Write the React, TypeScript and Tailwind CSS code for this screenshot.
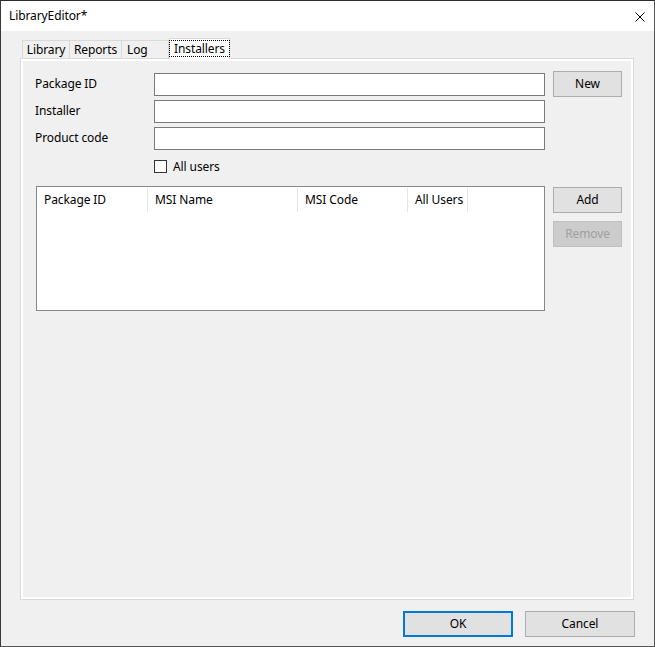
import React from 'react';

const font = { fontFamily: '"Noto Sans", "Open Sans", sans-serif' };

interface BtnProps {
  label: string;
  disabled?: boolean;
  primary?: boolean;
  className?: string;
}

const WinButton: React.FC<BtnProps> = ({ label, disabled, primary, className }) => {
  let cls = 'flex items-center justify-center text-[12px] ';
  if (disabled) cls += 'bg-[#cccccc] border border-[#bfbfbf] text-[#a0a0a0] ';
  else if (primary) cls += 'bg-[#e1e1e1] border-2 border-[#0078d7] text-black ';
  else cls += 'bg-[#e1e1e1] border border-[#adadad] text-black ';
  return <div className={cls + (className || '')}>{label}</div>;
};

const TextBox: React.FC = () => (
  <div className="h-[23px] w-[391px] bg-white border border-[#7a7a7a]" />
);

const columns = [
  { name: 'Package ID', w: 'w-[111px]' },
  { name: 'MSI Name', w: 'w-[150px]' },
  { name: 'MSI Code', w: 'w-[110px]' },
  { name: 'All Users', w: 'w-[60px]' },
];

export default function App() {
  return (
    <div
      className="w-[655px] h-[647px] flex flex-col bg-[#f0f0f0] border border-[#555555] border-l-[#3a3a3a] border-t-[#2c2c2c] text-black tracking-[-0.1px]"
      style={font}
    >
      {/* title bar */}
      <div className="h-[30px] bg-white flex items-center justify-between pl-[8px] pr-[9px] shrink-0">
        <span className="text-[12px] leading-none">LibraryEditor*</span>
        <svg width="10" height="10" viewBox="0 0 10 10" className="mt-[1px]">
          <path d="M0.5 0.5 L9.5 9.5 M9.5 0.5 L0.5 9.5" stroke="#000" strokeWidth="1" />
        </svg>
      </div>

      {/* body */}
      <div className="flex-1 flex flex-col pl-[19px] pr-[19px] pt-[7px]">
        {/* tabs */}
        <div className="h-[20px] flex items-end pl-[2px] relative z-10">
          <div className="h-[18px] w-[48px] border border-b-0 border-[#d9d9d9] flex items-center justify-center text-[12px]">
            Library
          </div>
          <div className="h-[18px] w-[52px] border border-b-0 border-l-0 border-[#d9d9d9] flex items-center justify-center text-[12px]">
            Reports
          </div>
          <div className="h-[18px] w-[47px] border border-b-0 border-l-0 border-[#d9d9d9] flex items-center justify-start pl-[5px] text-[12px]">
            Log
          </div>
          <div className="h-[21px] w-[61px] -mb-[1px] bg-white border border-b-0 border-[#d9d9d9] flex items-start justify-center pt-[1px]">
            <span className="border border-dotted border-black px-[4px] h-[17px] flex items-center text-[12px]">
              Installers
            </span>
          </div>
        </div>

        {/* tab page */}
        <div className="h-[542px] w-[614px] border border-[#d9d9d9] bg-white p-[2px]">
          <div className="h-full bg-[#f0f0f0] pl-[12px] pt-[10px] relative">
            <div className="flex">
              <div className="flex flex-col">
                <div className="flex mt-[2px]">
                  <div className="w-[119px] text-[12px] h-[23px] flex items-center -mt-[1px]">Package ID</div>
                  <TextBox />
                </div>
                <div className="flex mt-[4px]">
                  <div className="w-[119px] text-[12px] h-[23px] flex items-center -mt-[1px]">Installer</div>
                  <TextBox />
                </div>
                <div className="flex mt-[4px]">
                  <div className="w-[119px] text-[12px] h-[23px] flex items-center -mt-[1px]">Product code</div>
                  <TextBox />
                </div>
                <div className="flex items-center ml-[119px] mt-[9px] h-[14px]">
                  <div className="w-[13px] h-[13px] bg-white border border-[#333333]" />
                  <span className="ml-[6px] text-[12px] mt-[1px]">All users</span>
                </div>
              </div>
              <WinButton label="New" className="ml-[8px] w-[69px] h-[26px]" />
            </div>

            <div className="flex mt-[13px]">
              {/* list view */}
              <div className="ml-[1px] w-[509px] h-[125px] bg-white border border-[#828790] pt-[1px]">
                <div className="flex h-[24px]">
                  {columns.map((c) => (
                    <div
                      key={c.name}
                      className={c.w + ' h-full border-r border-[#e5e5e5] flex items-center pl-[7px] text-[12px]'}
                    >
                      {c.name}
                    </div>
                  ))}
                </div>
              </div>
              <div className="flex flex-col ml-[8px] mt-[1px] gap-[8px]">
                <WinButton label="Add" className="w-[69px] h-[26px]" />
                <WinButton label="Remove" disabled className="w-[69px] h-[26px]" />
              </div>
            </div>
          </div>
        </div>

        {/* footer buttons */}
        <div className="flex justify-end mt-[11px] gap-[12px]">
          <WinButton label="OK" primary className="w-[110px] h-[26px]" />
          <WinButton label="Cancel" className="w-[110px] h-[26px]" />
        </div>
      </div>
    </div>
  );
}
